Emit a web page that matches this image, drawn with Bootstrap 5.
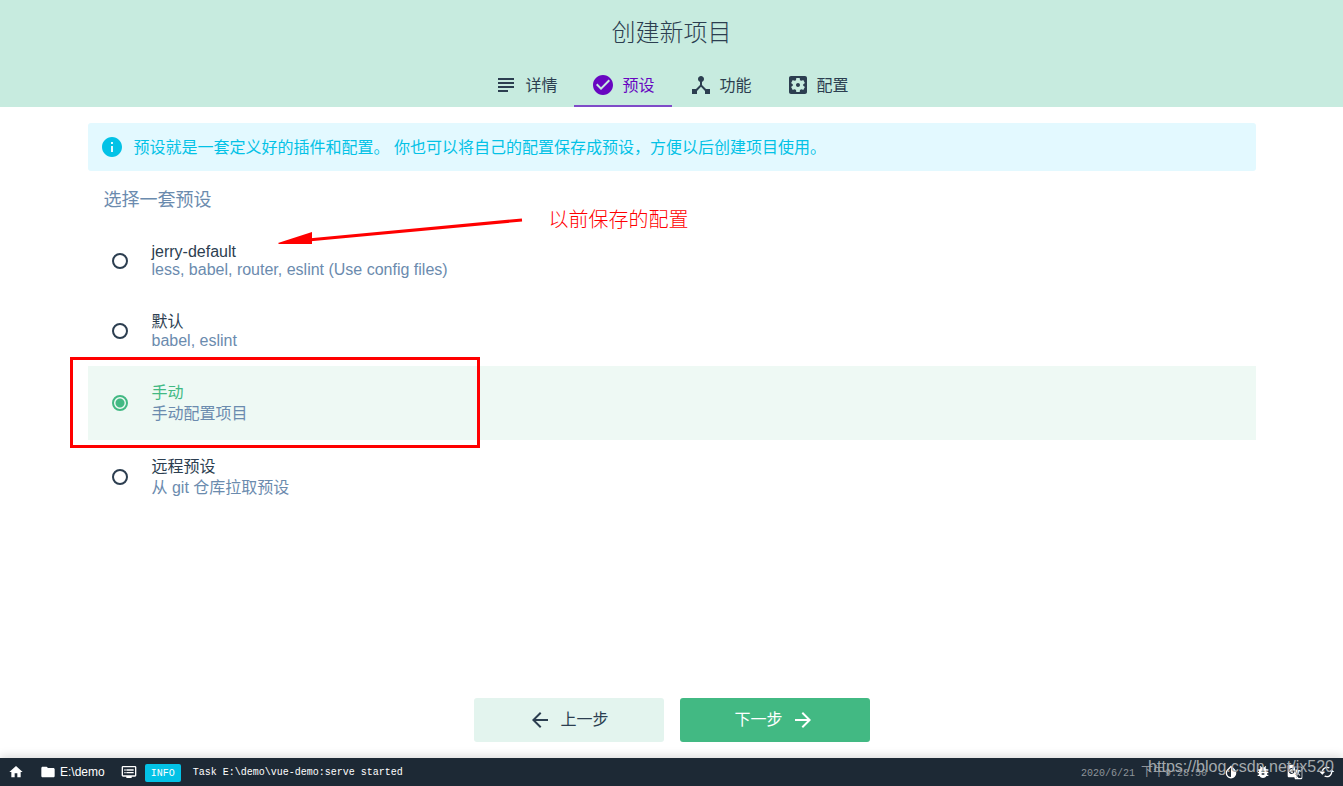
<!DOCTYPE html>
<html lang="zh-CN">
<head>
<meta charset="utf-8">
<meta name="viewport" content="width=device-width, initial-scale=1">
<title>创建新项目</title>
<link href="https://cdn.jsdelivr.net/npm/bootstrap@5.3.0/dist/css/bootstrap.min.css" rel="stylesheet">
<style>
  body { font-family: "Liberation Sans", "Noto Sans CJK SC", sans-serif; font-size: 16px; font-weight: 400; line-height: 21px; color: #2c3e50; background: #fff; }
  svg { fill: currentColor; flex: none; }
  .ico { width: 24px; height: 24px; }
  .ico-sm { width: 16px; height: 16px; }
  .wizard-head { background: #c7ebdf; }
  .wizard-title { font-size: 24px; font-weight: 300; line-height: 32px; padding: 17px 0 15px; }
  .wizard-tabs .nav-link { color: #2c3e50; padding: 9px 17px 8px; border-bottom: 2px solid transparent; height: 43px; gap: 7px; }
  .wizard-tabs .nav-link.active { color: #6806c1; border-color: #7f4cc8; }
  .page-width { max-width: 1200px; }
  .tip { background: #e3f9ff; color: #03c2e6; border-radius: 3px; padding: 12px; gap: 10px; }
  .group-title { font-size: 18px; line-height: 24px; font-weight: 400; color: #6b8bae; padding: 17px 16px 15px; }
  .preset { padding: 16px 24px; gap: 24px; }
  .preset.selected { background: #eef9f4; }
  .preset.selected .preset-name { color: #42b983; }
  .preset-info { color: #6b8bae; }
  .latin { line-height: 18px; }
  .preset .form-check-input { width: 16px; height: 16px; margin: 0; border: 2px solid #2c3e50; background: none; box-shadow: none; flex: none; }
  .preset .form-check-input:checked { border-color: #42b983; background: radial-gradient(circle, #42b983 4px, transparent 5px); }
  .wizard-btn { width: 190px; height: 44px; border-radius: 3px; border: 0; gap: 8px; }
  .btn-back { background: #e3f4ee; color: #2c3e50; }
  .btn-next { background: #42b983; color: #fff; }
  .statusbar { background: #1d2935; color: #fff; height: 28px; font-size: 12px; line-height: 16px; box-shadow: 0 -2px 10px rgba(0,0,0,.15); }
  .statusbar a, .statusbar button { color: #fff; padding: 6px 8px; background: none; border: 0; height: 28px; }
  .folder-link { gap: 4px; }
  .mono { font-family: "Liberation Mono", "Noto Sans CJK SC", monospace; font-size: 10px; padding-top: 2px; }
  .log-level { background: #03c2e6; border-radius: 2px; padding: 2px 6px 0; margin-top: 2px; }
  .when { color: #8e949a; }
  .when span { font-size: 12px; }
  /* red notes laid over the page */
  .note-box { left: -18px; top: -9px; width: 410px; height: 91px; border: 3px solid #f00; pointer-events: none; }
  .note-arrow { left: 190px; top: -12px; width: 246px; height: 32px; color: #f00; }
  .note-text { left: 461px; top: -19px; font-size: 20px; font-weight: 300; line-height: 24px; color: #f00; white-space: nowrap; }
  .watermark { right: 9px; bottom: 9px; font-size: 16px; line-height: 20px; color: #a4a9ad; pointer-events: none; }
</style>
</head>
<body class="d-flex flex-column min-vh-100">
<header class="wizard-head text-center">
  <h1 class="wizard-title m-0">创建新项目</h1>
  <nav class="nav wizard-tabs justify-content-center">
    <a class="nav-link d-flex align-items-center" href="#details"><svg class="ico" viewBox="0 0 24 24"><path d="M14 17H4v2h10v-2zm6-8H4v2h16V9zM4 15h16v-2H4v2zM4 5v2h16V5H4z"/></svg><span>详情</span></a>
    <a class="nav-link active d-flex align-items-center" href="#presets" aria-current="page"><svg class="ico" viewBox="0 0 24 24"><path d="M12 2C6.48 2 2 6.48 2 12s4.48 10 10 10 10-4.48 10-10S17.52 2 12 2zm-2 15l-5-5 1.41-1.41L10 14.17l7.59-7.59L19 8l-9 9z"/></svg><span>预设</span></a>
    <a class="nav-link d-flex align-items-center" href="#features"><svg class="ico" viewBox="0 0 24 24"><path d="M17 16l-4-4V8.82C14.16 8.4 15 7.3 15 6c0-1.66-1.34-3-3-3S9 4.34 9 6c0 1.3.84 2.4 2 2.82V12l-4 4H3v5h5v-3.05l4-4.2 4 4.2V21h5v-5h-4z"/></svg><span>功能</span></a>
    <a class="nav-link d-flex align-items-center" href="#config"><svg class="ico" viewBox="0 0 24 24"><path d="M12 10c-1.1 0-2 .9-2 2s.9 2 2 2 2-.9 2-2-.9-2-2-2zm7-7H5c-1.11 0-2 .9-2 2v14c0 1.1.89 2 2 2h14c1.11 0 2-.9 2-2V5c0-1.1-.89-2-2-2zm-1.75 9c0 .23-.02.46-.05.68l1.48 1.16c.13.11.17.3.08.45l-1.4 2.42c-.09.15-.27.21-.43.15l-1.74-.7c-.36.28-.76.51-1.18.69l-.26 1.85c-.03.17-.18.3-.35.3h-2.8c-.17 0-.32-.13-.35-.29l-.26-1.85c-.43-.18-.82-.41-1.18-.69l-1.74.7c-.16.06-.34 0-.43-.15l-1.4-2.42c-.09-.15-.05-.34.08-.45l1.48-1.16c-.03-.23-.05-.46-.05-.69s.02-.46.05-.68l-1.48-1.16c-.13-.11-.17-.3-.08-.45l1.4-2.42c.09-.15.27-.21.43-.15l1.74.7c.36-.28.76-.51 1.18-.69l.26-1.85c.03-.17.18-.3.35-.3h2.8c.17 0 .32.13.35.29l.26 1.85c.43.18.82.41 1.18.69l1.74-.7c.16-.06.34 0 .43.15l1.4 2.42c.09.15.05.34-.08.45l-1.48 1.16c.03.23.05.46.05.69z"/></svg><span>配置</span></a>
  </nav>
</header>

<main class="page-width container-fluid flex-grow-1 px-3 pt-3">
  <div class="tip d-flex align-items-center">
    <svg class="ico" viewBox="0 0 24 24"><path d="M12 2C6.48 2 2 6.48 2 12s4.48 10 10 10 10-4.48 10-10S17.52 2 12 2zm1 15h-2v-6h2v6zm0-8h-2V7h2v2z"/></svg>
    <span>预设就是一套定义好的插件和配置。 你也可以将自己的配置保存成预设，方便以后创建项目使用。</span>
  </div>
  <h2 class="group-title m-0">选择一套预设</h2>
  <div class="preset-list" role="radiogroup" aria-label="选择一套预设">
    <label class="preset d-flex align-items-center position-relative">
      <input class="form-check-input" type="radio" name="preset">
      <span><span class="preset-name latin d-block">jerry-default</span><span class="preset-info latin d-block">less, babel, router, eslint (Use config files)</span></span>
      <svg class="note-arrow position-absolute" viewBox="0 0 246 32" aria-hidden="true"><path d="M0 28L34 17V29H1z"/><path d="M30 25L244 5" fill="none" stroke="currentColor" stroke-width="3"/></svg>
      <span class="note-text position-absolute">以前保存的配置</span>
    </label>
    <label class="preset d-flex align-items-center">
      <input class="form-check-input" type="radio" name="preset">
      <span><span class="preset-name d-block">默认</span><span class="preset-info latin d-block">babel, eslint</span></span>
    </label>
    <label class="preset selected d-flex align-items-center position-relative">
      <input class="form-check-input" type="radio" name="preset" checked>
      <span><span class="preset-name d-block">手动</span><span class="preset-info d-block">手动配置项目</span></span>
      <span class="note-box position-absolute"></span>
    </label>
    <label class="preset d-flex align-items-center">
      <input class="form-check-input" type="radio" name="preset">
      <span><span class="preset-name d-block">远程预设</span><span class="preset-info d-block">从 git 仓库拉取预设</span></span>
    </label>
  </div>
</main>

<div class="d-flex justify-content-center gap-3 p-3">
  <button type="button" class="btn wizard-btn btn-back d-flex align-items-center justify-content-center"><svg class="ico" viewBox="0 0 24 24"><path d="M20 11H7.830l5.590-5.590L12 4l-8 8 8 8 1.410-1.410L7.830 13H20v-2z"/></svg><span>上一步</span></button>
  <button type="button" class="btn wizard-btn btn-next d-flex align-items-center justify-content-center"><span>下一步</span><svg class="ico" viewBox="0 0 24 24"><path d="M12 4l-1.410 1.410L16.170 11H4v2h12.170l-5.580 5.590L12 20l8-8z"/></svg></button>
</div>

<footer class="statusbar d-flex align-items-center position-relative">
  <a class="d-flex" href="#home" aria-label="Home"><svg class="ico-sm" viewBox="0 0 24 24"><path d="M10 20v-6h4v6h5v-8h3L12 3 2 12h3v8z"/></svg></a>
  <a class="folder-link d-flex align-items-center text-decoration-none" href="#folder"><svg class="ico-sm" viewBox="0 0 24 24"><path d="M10 4H4c-1.100 0-1.990.9-1.990 2L2 18c0 1.100.9 2 2 2h16c1.100 0 2-.9 2-2V8c0-1.100-.9-2-2-2h-8l-2-2z"/></svg><span>E:\demo</span></a>
  <button type="button" class="d-flex" aria-label="Logs"><svg class="ico-sm" viewBox="0 0 24 24"><path d="M21 3H3c-1.100 0-2 .9-2 2v12c0 1.100.9 2 2 2h5v2h8v-2h5c1.100 0 1.990-.9 1.990-2L23 5c0-1.100-.9-2-2-2zm0 14H3V5h18v12zm-2-9H8v2h11V8zm0 4H8v2h11v-2zM7 8H5v2h2V8zm0 4H5v2h2v-2z"/></svg></button>
  <span class="log-level mono">INFO</span>
  <span class="mono ps-2 ms-1">Task E:\demo\vue-demo:serve started</span>
  <span class="when mono ms-auto pe-2">2020/6/21 <span>下午</span>9:28:50</span>
  <button type="button" class="d-flex" aria-label="Theme"><svg class="ico-sm" viewBox="0 0 24 24"><path d="M17.660 7.930L12 2.270 6.340 7.930c-3.120 3.120-3.120 8.190 0 11.310C7.900 20.800 9.950 21.580 12 21.580c2.050 0 4.100-.78 5.660-2.340 3.120-3.120 3.120-8.190 0-11.310zM12 19.590c-1.600 0-3.110-.62-4.240-1.760C6.620 16.690 6 15.190 6 13.590s.62-3.110 1.760-4.240L12 5.100v14.490z"/></svg></button>
  <button type="button" class="d-flex" aria-label="Report a bug"><svg class="ico-sm" viewBox="0 0 24 24"><path d="M20 8h-2.810c-.45-.78-1.070-1.450-1.820-1.960L17 4.410 15.590 3l-2.170 2.170C12.960 5.060 12.490 5 12 5c-.49 0-.96.06-1.410.17L8.410 3 7 4.410l1.620 1.630C7.880 6.550 7.260 7.220 6.810 8H4v2h2.090c-.05.33-.09.66-.09 1v1H4v2h2v1c0 .34.04.67.09 1H4v2h2.810c1.040 1.790 2.970 3 5.190 3s4.150-1.210 5.190-3H20v-2h-2.090c.05-.33.09-.66.09-1v-1h2v-2h-2v-1c0-.34-.04-.67-.09-1H20V8zm-6 8h-4v-2h4v2zm0-4h-4v-2h4v2z"/></svg></button>
  <button type="button" class="d-flex" aria-label="Translate"><svg class="ico-sm" viewBox="0 0 24 24"><path fill-rule="evenodd" d="M21 4H11l-1-3H3a2 2 0 0 0-2 2v15c0 1.100.9 2 2 2h8l1 3h9a2 2 0 0 0 2-2V6a2 2 0 0 0-2-2zM7 15a4.500 4.500 0 1 1 3-8L8.800 8.200A2.800 2.800 0 1 0 9.600 11.500H7V9.900h4.300C11.600 12.600 10 15 7 15zM13 21l2-2-3-10h2v-1h2v1h4v1h-1c-.3 1.500-1 2.900-2 4l3 3-.8.8-2.700-2.800-1 1L17 21h4c.5 0 1-.5 1-1V6c0-.5-.5-1-1-1h-9.700l4.700 14z"/></svg></button>
  <button type="button" class="d-flex" aria-label="Refresh"><svg class="ico-sm" viewBox="0 0 24 24"><path d="M19 8l-4 4h3c0 3.310-2.690 6-6 6-1.010 0-1.970-.25-2.800-.7l-1.460 1.460C8.970 19.540 10.430 20 12 20c4.420 0 8-3.580 8-8h3l-4-4zM6 12c0-3.310 2.690-6 6-6 1.010 0 1.970.25 2.800.7l1.460-1.460C15.030 4.460 13.570 4 12 4c-4.420 0-8 3.580-8 8H1l4 4 4-4H6z"/></svg></button>
  <span class="watermark position-absolute">https://blog.csdn.net/jx520</span>
</footer>
<script src="https://cdn.jsdelivr.net/npm/bootstrap@5.3.0/dist/js/bootstrap.bundle.min.js"></script>
</body>
</html>
